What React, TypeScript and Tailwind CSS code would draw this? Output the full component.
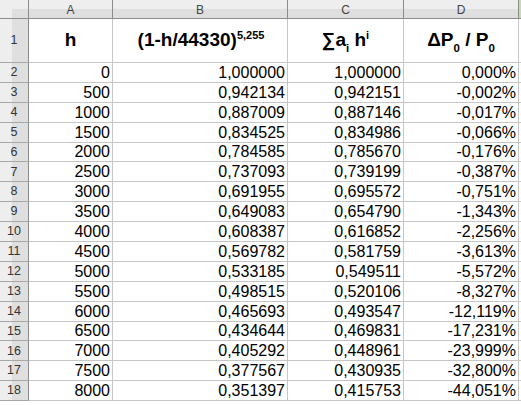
const rows: [string, string, string, string][] = [
  ['0', '1,000000', '1,000000', '0,000%'],
  ['500', '0,942134', '0,942151', '-0,002%'],
  ['1000', '0,887009', '0,887146', '-0,017%'],
  ['1500', '0,834525', '0,834986', '-0,066%'],
  ['2000', '0,784585', '0,785670', '-0,176%'],
  ['2500', '0,737093', '0,739199', '-0,387%'],
  ['3000', '0,691955', '0,695572', '-0,751%'],
  ['3500', '0,649083', '0,654790', '-1,343%'],
  ['4000', '0,608387', '0,616852', '-2,256%'],
  ['4500', '0,569782', '0,581759', '-3,613%'],
  ['5000', '0,533185', '0,549511', '-5,572%'],
  ['5500', '0,498515', '0,520106', '-8,327%'],
  ['6000', '0,465693', '0,493547', '-12,119%'],
  ['6500', '0,434644', '0,469831', '-17,231%'],
  ['7000', '0,405292', '0,448961', '-23,999%'],
  ['7500', '0,377567', '0,430935', '-32,800%'],
  ['8000', '0,351397', '0,415753', '-44,051%'],
];

function ColHead({ label }: { label: string }) {
  return (
    <div className="flex flex-col border-r border-b border-[#8c8c8c] bg-[#dfdfdf]">
      <div className="h-[9px] bg-[#eeeeee]" />
      <div className="flex-1 relative">
        <span className="absolute inset-x-0 -top-[8px] text-center text-[12px] text-[#444]">{label}</span>
      </div>
    </div>
  );
}

function RowHead({ n }: { n: number }) {
  return (
    <div className="relative flex border-r border-b border-r-[#8c8c8c] border-b-[#a8a8a8]">
      <div className="w-[12px] bg-[#eeeeee]" />
      <div className="flex-1 bg-[#dfdfdf]" />
      <div className="absolute inset-0 flex items-center justify-center text-[12.5px] text-[#333]">{n}</div>
    </div>
  );
}

function Cell({ value }: { value: string }) {
  return (
    <div className="flex items-end justify-end border-r border-b border-[#c6c6c6] bg-white pr-[2px] text-[16px] leading-[18px] text-black">
      {value}
    </div>
  );
}

function Sub({ children }: { children: string }) {
  return <span className="relative top-[6px] text-[11.5px]">{children}</span>;
}

function Sup({ children }: { children: string }) {
  return <span className="relative -top-[7px] text-[11px]">{children}</span>;
}

export default function App() {
  return (
    <div
      className="w-[521px] h-[405px] overflow-hidden bg-white"
      style={{ fontFamily: '"Liberation Sans", Arial, sans-serif' }}
    >
      <div className="grid grid-cols-[29px_84px_175px_116px_115px_2px] grid-rows-[19px_44px_repeat(17,19.9px)]">
        <div className="border-r border-b border-[#8c8c8c] flex flex-col bg-[#dfdfdf]">
          <div className="h-[9px] bg-[#eeeeee]" />
          <div className="flex-1 flex">
            <div className="w-[12px] bg-[#eeeeee]" />
          </div>
        </div>
        <ColHead label="A" />
        <ColHead label="B" />
        <ColHead label="C" />
        <ColHead label="D" />
        <div className="bg-[#c4dcb0] border-b border-[#8c8c8c]" />

        {/* Row 1: headings */}
        <RowHead n={1} />
        <div className="flex items-center justify-center border-r border-b border-[#c6c6c6] text-[19px] font-bold">h</div>
        <div className="flex items-center justify-center border-r border-b border-[#c6c6c6] pl-[2px] text-[19px] font-bold">
          <span className="whitespace-nowrap">
            (1-h/44330)<Sup>5,255</Sup>
          </span>
        </div>
        <div className="flex items-center justify-center border-r border-b border-[#c6c6c6] text-[19px] font-bold">
          <span className="whitespace-nowrap">
            ∑a<Sub>i</Sub> h<Sup>i</Sup>
          </span>
        </div>
        <div className="flex items-center justify-center border-r border-b border-[#c6c6c6] text-[19px] font-bold">
          <span className="whitespace-nowrap">
            ΔP<Sub>0</Sub> / P<Sub>0</Sub>
          </span>
        </div>
        <div className="border-b border-[#c6c6c6]" />

        {rows.map((r, i) => (
          <div key={i} className="contents">
            <RowHead n={i + 2} />
            <Cell value={r[0]} />
            <Cell value={r[1]} />
            <Cell value={r[2]} />
            <Cell value={r[3]} />
            <div className="border-b border-[#c6c6c6]" />
          </div>
        ))}
      </div>
    </div>
  );
}
